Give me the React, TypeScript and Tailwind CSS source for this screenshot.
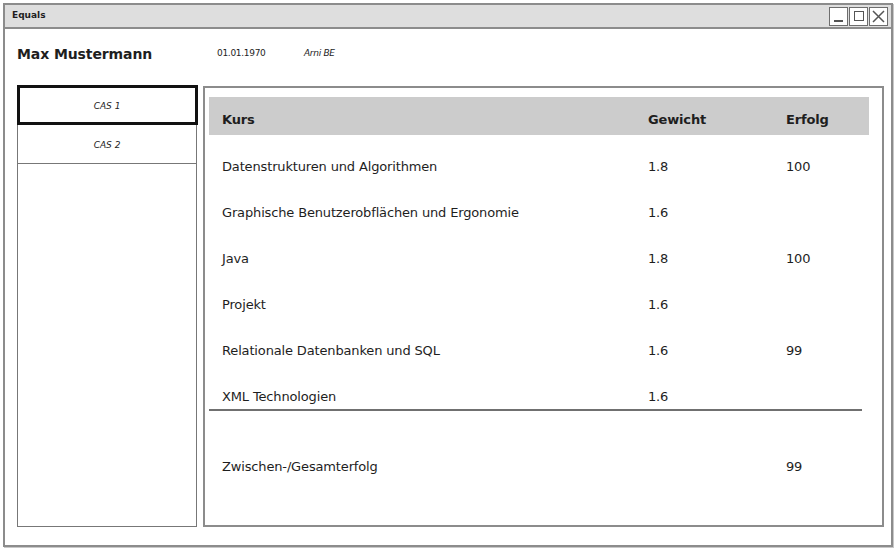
const courses = [
  { name: 'Datenstrukturen und Algorithmen', weight: '1.8', result: '100' },
  { name: 'Graphische Benutzerobflächen und Ergonomie', weight: '1.6', result: '' },
  { name: 'Java', weight: '1.8', result: '100' },
  { name: 'Projekt', weight: '1.6', result: '' },
  { name: 'Relationale Datenbanken und SQL', weight: '1.6', result: '99' },
  { name: 'XML Technologien', weight: '1.6', result: '' },
];

function WindowButton({ children }: { children: React.ReactNode }) {
  return (
    <div className="w-[19px] h-[19px] border-[1.5px] border-[#6e6e6e] bg-white flex items-center justify-center">
      {children}
    </div>
  );
}

export default function App() {
  return (
    <div
      className="w-[896px] h-[552px] bg-white pl-[3px] pt-[3px] text-[#1e1e1e]"
      style={{ fontFamily: '"DejaVu Sans", sans-serif' }}
    >
      <div className="w-[890px] h-[544px] border-2 border-[#8c8c8c] flex flex-col shadow-[1px_1px_0_#c8c8c8]">
        {/* title bar */}
        <div className="h-[24px] bg-[#dedede] border-b-2 border-[#8c8c8c] flex items-center justify-between pl-[7px] pr-[3px] shrink-0">
          <span className="text-[9px] font-bold">Equals</span>
          <div className="flex gap-[1px]">
            <WindowButton>
              <div className="w-[9px] h-[2px] bg-[#555] mt-[9px]" />
            </WindowButton>
            <WindowButton>
              <div className="w-[10px] h-[10px] border-[1.5px] border-[#555]" />
            </WindowButton>
            <WindowButton>
              <svg width="13" height="13" viewBox="0 0 13 13" stroke="#555" strokeWidth="1.5">
                <path d="M1 1L12 12M12 1L1 12" />
              </svg>
            </WindowButton>
          </div>
        </div>

        {/* person header */}
        <div className="h-[56px] flex items-center pl-[12px] pb-[6px] shrink-0">
          <span className="w-[200px] text-[14px] font-bold tracking-[-0.1px]">Max Mustermann</span>
          <span className="w-[87px] text-[9px] tracking-[-0.3px]">01.01.1970</span>
          <span className="text-[9px] italic tracking-[-0.3px]">Arni BE</span>
        </div>

        <div className="flex-1 flex gap-[6px] pl-[12px] pr-[7px] pb-[18px]">
          {/* left tabs */}
          <div className="w-[180px] border-[1.5px] border-[#777] flex flex-col">
            <div className="h-[40px] -mx-[1.5px] -mt-[1px] pt-[3px] border-[3px] border-[#111] flex items-center justify-center text-[9px] italic">
              CAS 1
            </div>
            <div className="h-[39px] pt-[4px] border-b-[1.5px] border-[#777] flex items-center justify-center text-[9px] italic">
              CAS 2
            </div>
          </div>

          {/* course table */}
          <div className="flex-1 border-2 border-[#8c8c8c] mt-[1px] pl-[4px] pr-[13px] pt-[9px] text-[13px] tracking-[-0.15px]">
            <div className="h-[38px] pt-[8px] bg-[#cccccc] grid grid-cols-[426px_138px_1fr] items-center font-bold">
              <span className="pl-[13px]">Kurs</span>
              <span className="pl-[13px]">Gewicht</span>
              <span className="pl-[13px]">Erfolg</span>
            </div>
            {courses.map((c) => (
              <div key={c.name} className="mt-[17px] h-[29px] grid grid-cols-[426px_138px_1fr] items-center">
                <span className="pl-[13px]">{c.name}</span>
                <span className="pl-[13px]">{c.weight}</span>
                <span className="pl-[13px]">{c.result}</span>
              </div>
            ))}
            <div className="-mt-[2px] h-[2px] bg-[#707070] mr-[7px]" />
            <div className="mt-[41px] h-[29px] grid grid-cols-[426px_138px_1fr] items-center">
              <span className="pl-[13px]">Zwischen-/Gesamterfolg</span>
              <span />
              <span className="pl-[13px]">99</span>
            </div>
          </div>
        </div>
      </div>
    </div>
  );
}
